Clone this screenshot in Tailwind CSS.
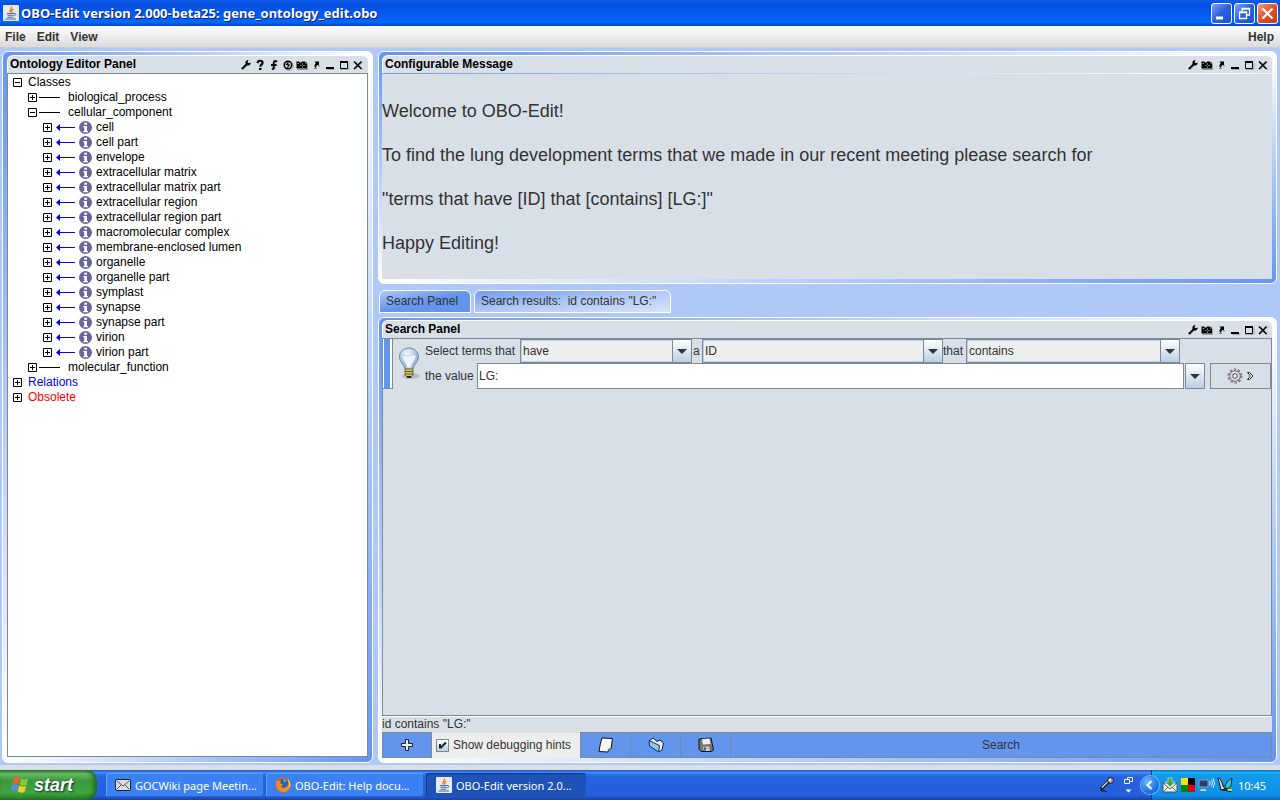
<!DOCTYPE html>
<html lang="en">
<head>
<meta charset="utf-8">
<title>OBO-Edit version 2.000-beta25: gene_ontology_edit.obo</title>
<script src="https://cdn.jsdelivr.net/npm/@tailwindcss/browser@4"></script>
</head>
<body class="flex h-screen flex-col overflow-hidden bg-[#d8dfe6] font-['Liberation_Sans',Arial,sans-serif] text-xs leading-[15px] text-[#333]">

<svg class="hidden" aria-hidden="true">
  <symbol id="wrench" viewBox="0 0 12 12"><path d="M3 11L7 6.500M2 9.500L6 6" stroke="#999" stroke-width="1"/><path d="M1 9.500L5.500 5L5.500 2.500L7.500 1L8.500 1L7.500 3L8.500 4.200L10.500 3.500L10.500 5L9 6.500L6.800 6.500L2.500 10.500Z" fill="#000"/></symbol>
  <symbol id="help" viewBox="0 0 12 12"><path d="M4.500 5V3.500C4.500 1.500 9.500 1.500 9.500 4C9.500 6 7.500 6 7.500 8" fill="none" stroke="#aaa" stroke-width="1.500"/><path d="M3.500 4C3.500 1 8.500 1 8.500 3.700C8.500 5.500 6.200 5.500 6.200 7.700" fill="none" stroke="#000" stroke-width="2"/><path d="M5 9h2.500v2H5z"/></symbol>
  <symbol id="fmark" viewBox="0 0 12 12"><path d="M10 3C7.500 1.500 7 3 7 5V10.500M5 6.500h5" fill="none" stroke="#aaa"/><path d="M9 2.800C6.500 1 5.700 2.500 5.700 4.500V9.500L4 10.500M3 6h5.500" fill="none" stroke="#000" stroke-width="2"/></symbol>
  <symbol id="dock" viewBox="0 0 12 12"><circle cx="7" cy="7" r="4.300" fill="none" stroke="#aaa"/><circle cx="6" cy="6" r="3.700" fill="#d8dfe6" stroke="#000" stroke-width="1.600"/><path d="M6.500 2L3.500 6h2.200L5.200 9.500L8.500 5.500H6.500Z"/></symbol>
  <symbol id="camera" viewBox="0 0 12 12"><path d="M1.500 10.500h10v-6" fill="none" stroke="#999"/><path d="M.5 2.500h3v1h2l.5-1h3l.5 1h1.500v6H.5Z"/><path d="M6.500 4.500v1M6.500 7.500v1M4.500 6.500h1M7.500 6.500h1" stroke="#d8dfe6"/><path d="M1.500 4.500h1.500M9.500 4.500h1" stroke="#d8dfe6" stroke-width=".7"/></symbol>
  <symbol id="float" viewBox="0 0 12 12"><path d="M4.500 2.500H9v4.300L7.700 5.700C6.300 6.700 6 7.500 6.300 9C4 8.200 3.800 6.300 5.800 4Z"/><path d="M4 9.500h3M8.500 7.500l1.500-1" stroke="#888"/></symbol>
  <symbol id="min" viewBox="0 0 12 12"><path d="M3 10.500h8" stroke="#aaa"/><path d="M2 9h8" stroke="#000" stroke-width="2"/></symbol>
  <symbol id="max" viewBox="0 0 12 12"><path d="M2.500 10.500h8.500v-7" fill="none" stroke="#aaa"/><path d="M2.500 2.500h7v7h-7z" fill="none" stroke="#000"/><path d="M2 2h8v2H2z"/></symbol>
  <symbol id="close" viewBox="0 0 12 12"><path d="M3 10.500l8-7.500M4 3l7 8" stroke="#aaa"/><path d="M2 2.500l7.500 7.500M9.500 2.500L2 10" stroke="#000" stroke-width="1.500"/></symbol>
  <symbol id="plus" viewBox="0 0 9 9"><path d="M.5.5h8v8h-8z" fill="#fff" stroke="#000"/><path d="M2 4.500h5M4.500 2v5" stroke="#000"/></symbol>
  <symbol id="minus" viewBox="0 0 9 9"><path d="M.5.5h8v8h-8z" fill="#fff" stroke="#000"/><path d="M2 4.500h5" stroke="#000"/></symbol>
  <symbol id="line" viewBox="0 0 23 9"><path d="M2 4.500h21" stroke="#000"/></symbol>
  <symbol id="link" viewBox="0 0 19 9"><path d="M3 4.500h16" stroke="#00f"/><path d="M0 4.500L4 1v7z" fill="#00f"/></symbol>
  <symbol id="info" viewBox="0 0 13 13"><circle cx="6.500" cy="6.500" r="6.500" fill="#666699"/><path d="M5.300 1.800h2.700v2H5.300zM4.300 5H8v5h1v1.200H4.300V10h1V6.200h-1z" fill="#fff"/></symbol>
  <symbol id="java" viewBox="0 0 16 16"><rect width="16" height="16" rx="1" fill="#e9e9e9"/><path d="M8.500 1.500C9.500 3.500 5.500 4.500 7.500 7.500M10.500 4C8 5 8.500 6 9 7.500" fill="none" stroke="#e8701a" stroke-width="1.300"/><path d="M4 8.500h7M4.500 10.300h6M4.500 12.200h5.500M2.500 14h10.500M11 8.500c2.500-.5 2.500 2-.3 2.500" fill="none" stroke="#3d6ba5"/></symbol>
  <symbol id="arrow" viewBox="0 0 10 5"><path d="M0 0h10L5 5z" fill="#333"/></symbol>
</svg>

<header class="flex h-[26px] shrink-0 items-center bg-[linear-gradient(#0a5ff0,#0a4fdc_15%,#0058ee_45%,#0668fa_85%,#0144c6)] pl-[3px] pr-[2px] text-white">
  <svg class="h-4 w-4"><use href="#java"/></svg>
  <h1 class="flex-1 pl-[2px] font-['Noto_Sans',sans-serif] text-[13px] font-bold [text-shadow:1px_1px_#0a1883]">OBO-Edit version 2.000-beta25: gene_ontology_edit.obo</h1>
  <div class="flex gap-[2px]">
    <button aria-label="Minimize" class="h-[21px] w-[21px] rounded-[3px] border border-white bg-[linear-gradient(135deg,#7fa4f4,#2a5ee0_50%,#1f52d2)]"><svg viewBox="0 0 19 19"><path d="M4 14h7" stroke="#fff" stroke-width="3"/></svg></button>
    <button aria-label="Restore" class="h-[21px] w-[21px] rounded-[3px] border border-white bg-[linear-gradient(135deg,#7fa4f4,#2a5ee0_50%,#1f52d2)]"><svg viewBox="0 0 19 19"><path d="M7 7V4.500h7.500V11H12M4.500 8h7v6.500h-7zM4 8.500h8M7 5h8" fill="none" stroke="#fff" stroke-width="1.300"/></svg></button>
    <button aria-label="Close" class="h-[21px] w-[21px] rounded-[3px] border border-white bg-[linear-gradient(135deg,#f0a088,#e0502a_50%,#c83a12)]"><svg viewBox="0 0 19 19"><path d="M4.500 4.500l10 10M14.500 4.500l-10 10" stroke="#fff" stroke-width="2.200"/></svg></button>
  </div>
</header>

<nav class="flex h-[22px] shrink-0 items-center gap-[11px] border-b border-[#ccc] bg-linear-to-b from-white to-[#dadada] pl-[5px] pr-[6px] pt-px font-bold">
  <button>File</button><button>Edit</button><button>View</button><button class="ml-auto">Help</button>
</nav>

<main class="flex min-h-0 flex-1 gap-[5px] bg-[#b0c8f5] pb-[2px] pl-[2px] pr-[3px] pt-[3px]">

  <section class="flex w-[371px] shrink-0 flex-col rounded-md border border-white bg-[linear-gradient(to_bottom_right,#6495ed,#fff,#6495ed)] p-1 pb-[5px] pt-[3px]">
    <div class="flex h-[18px] shrink-0 items-center rounded-t-md border-l border-t border-white bg-[#d8dfe6] pl-[2px] pr-[4px] text-black">
      <h2 class="flex-1 font-bold">Ontology Editor Panel</h2>
      <div class="flex gap-[2px]">
        <button aria-label="Configure"><svg class="h-3 w-3"><use href="#wrench"/></svg></button>
        <button aria-label="Help"><svg class="h-3 w-3"><use href="#help"/></svg></button>
        <button aria-label="Filter"><svg class="h-3 w-3"><use href="#fmark"/></svg></button>
        <button aria-label="Synchronize"><svg class="h-3 w-3"><use href="#dock"/></svg></button>
        <button aria-label="Snapshot"><svg class="h-3 w-3"><use href="#camera"/></svg></button>
        <button aria-label="Undock"><svg class="h-3 w-3"><use href="#float"/></svg></button>
        <button aria-label="Minimize panel"><svg class="h-3 w-3"><use href="#min"/></svg></button>
        <button aria-label="Maximize panel"><svg class="h-3 w-3"><use href="#max"/></svg></button>
        <button aria-label="Close panel"><svg class="h-3 w-3"><use href="#close"/></svg></button>
      </div>
    </div>
    <ul class="min-h-0 flex-1 border border-[#7a8a99] bg-white pl-[5px] pt-px text-black [&_div]:flex [&_div]:h-[15px] [&_div]:items-center">
      <li><div><svg class="mr-[6px] h-[9px] w-[9px]"><use href="#minus"/></svg>Classes</div>
        <ul class="pl-[15px]">
          <li><div><svg class="h-[9px] w-[9px]"><use href="#plus"/></svg><svg class="mr-2 h-[9px] w-[23px]"><use href="#line"/></svg>biological_process</div></li>
          <li><div><svg class="h-[9px] w-[9px]"><use href="#minus"/></svg><svg class="mr-2 h-[9px] w-[23px]"><use href="#line"/></svg>cellular_component</div>
            <ul id="components" class="pl-[15px]"></ul>
          </li>
          <li><div><svg class="h-[9px] w-[9px]"><use href="#plus"/></svg><svg class="mr-2 h-[9px] w-[23px]"><use href="#line"/></svg>molecular_function</div></li>
        </ul>
      </li>
      <li><div class="text-[#00f]"><svg class="mr-[6px] h-[9px] w-[9px]"><use href="#plus"/></svg>Relations</div></li>
      <li><div class="text-[#f00]"><svg class="mr-[6px] h-[9px] w-[9px]"><use href="#plus"/></svg>Obsolete</div></li>
    </ul>
  </section>

  <div class="flex min-w-0 flex-1 flex-col">
    <section class="flex h-[233px] shrink-0 flex-col rounded-md border border-white bg-[linear-gradient(to_bottom_right,#6495ed,#fff,#6495ed)] p-[3px] pb-1 pr-1">
      <div class="flex h-[18px] shrink-0 items-center rounded-t-md border-l border-t border-white bg-[#d8dfe6] pl-[2px] pr-[3px] text-black">
        <h2 class="flex-1 font-bold">Configurable Message</h2>
        <div class="flex gap-[2px]">
          <button aria-label="Configure"><svg class="h-3 w-3"><use href="#wrench"/></svg></button>
          <button aria-label="Snapshot"><svg class="h-3 w-3"><use href="#camera"/></svg></button>
          <button aria-label="Undock"><svg class="h-3 w-3"><use href="#float"/></svg></button>
          <button aria-label="Minimize panel"><svg class="h-3 w-3"><use href="#min"/></svg></button>
          <button aria-label="Maximize panel"><svg class="h-3 w-3"><use href="#max"/></svg></button>
          <button aria-label="Close panel"><svg class="h-3 w-3"><use href="#close"/></svg></button>
        </div>
      </div>
      <div class="mt-px flex flex-1 flex-col gap-[22px] bg-[#d8dfe6] pt-[26px] text-lg leading-[22px]">
        <p>Welcome to OBO-Edit!</p>
        <p>To find the lung development terms that we made in our recent meeting please search for</p>
        <p>"terms that have [ID] that [contains] [LG:]"</p>
        <p>Happy Editing!</p>
      </div>
    </section>

    <div class="mb-[4px] mt-[6px] flex h-[23px] shrink-0 gap-[3px] pl-px" role="tablist">
      <button role="tab" aria-selected="true" class="w-[92px] rounded-t-md border border-white bg-linear-to-br from-[#b0c8f5] via-[#6495ed] to-[#6495ed] pl-[6px] text-left">Search Panel</button>
      <button role="tab" aria-selected="false" class="w-[197px] rounded-t-md border border-white bg-linear-to-br from-[#6f9cee] via-[#b0c8f5] to-[#d6e3fb] pl-[6px] text-left">Search results:&nbsp; id contains "LG:"</button>
    </div>

    <section class="flex min-h-0 flex-1 flex-col rounded-md border border-white bg-[linear-gradient(to_bottom_right,#6495ed,#fff,#6495ed)] p-[3px] pb-1 pr-1 pt-[2px]">
      <div class="flex h-[18px] shrink-0 items-center rounded-t-md border-l border-t border-white bg-[#d8dfe6] pl-[2px] pr-[3px] text-black">
        <h2 class="flex-1 font-bold">Search Panel</h2>
        <div class="flex gap-[2px]">
          <button aria-label="Configure"><svg class="h-3 w-3"><use href="#wrench"/></svg></button>
          <button aria-label="Snapshot"><svg class="h-3 w-3"><use href="#camera"/></svg></button>
          <button aria-label="Undock"><svg class="h-3 w-3"><use href="#float"/></svg></button>
          <button aria-label="Minimize panel"><svg class="h-3 w-3"><use href="#min"/></svg></button>
          <button aria-label="Maximize panel"><svg class="h-3 w-3"><use href="#max"/></svg></button>
          <button aria-label="Close panel"><svg class="h-3 w-3"><use href="#close"/></svg></button>
        </div>
      </div>
      <div class="flex min-h-0 flex-1 flex-col bg-[#d8dfe6]">
        <div class="min-h-0 flex-1 border border-[#7a8a99] shadow-[0_1px_#fff]">
          <div class="flex h-[50px]">
            <div class="flex w-[10px] border-b border-r border-[#7a8a99] bg-white pl-px"><span class="w-[6px] bg-[#6495ed]"></span></div>
            <svg class="ml-[4px] mt-[7px] h-9 w-6" viewBox="0 0 24 36">
              <defs><radialGradient id="glass" cx=".4" cy=".3"><stop offset="0" stop-color="#f4f9ff"/><stop offset=".6" stop-color="#c3d8f3"/><stop offset="1" stop-color="#9db9df"/></radialGradient></defs>
              <ellipse cx="14" cy="30" rx="9" ry="3" fill="#b4babf"/>
              <path d="M12 2C6.500 2 2.500 6 2.500 11C2.500 16 7 18 8 23H16C17 18 21.500 16 21.500 11C21.500 6 17.500 2 12 2Z" fill="url(#glass)" stroke="#7d8794"/>
              <path d="M5 10C7 8 10 11 12 10S17 8 19 10C18 15 15 16 14 22H10C9 17 6 15 5 10Z" fill="#eef5ff" stroke="#a8bfdc" stroke-width=".7"/>
              <path d="M8 23h8v6l-2 2h-4l-2-2z" fill="#cfc765" stroke="#77713a"/><path d="M8 25.500h8M8 28h8" stroke="#5e5a35"/><path d="M10 31h4" stroke="#222" stroke-width="2"/>
            </svg>
            <div class="flex min-w-0 flex-1 flex-col pl-[4px]">
              <div class="flex h-6 items-center">
                <label for="quant" class="w-[95px]">Select terms that</label>
                <div class="relative h-6 w-[172px]">
                  <select id="quant" class="h-full w-full appearance-none border border-[#7a8a99] bg-[#eee] pl-[2px] shadow-[inset_0_0_0_1px_#b8cfe5]"><option>have</option></select>
                  <span class="pointer-events-none absolute inset-y-0 right-0 flex w-5 items-center justify-center border border-[#7a8a99] bg-linear-to-b from-white to-[#b8cfe5]"><svg class="h-[5px] w-[10px]"><use href="#arrow"/></svg></span>
                </div>
                <label for="field" class="w-[10px] pl-px">a</label>
                <div class="relative h-6 w-[241px]">
                  <select id="field" class="h-full w-full appearance-none border border-[#7a8a99] bg-[#eee] pl-[2px] shadow-[inset_0_0_0_1px_#b8cfe5]"><option>ID</option></select>
                  <span class="pointer-events-none absolute inset-y-0 right-0 flex w-5 items-center justify-center border border-[#7a8a99] bg-linear-to-b from-white to-[#b8cfe5]"><svg class="h-[5px] w-[10px]"><use href="#arrow"/></svg></span>
                </div>
                <label for="op" class="w-[23px]">that</label>
                <div class="relative h-6 w-[214px]">
                  <select id="op" class="h-full w-full appearance-none border border-[#7a8a99] bg-[#eee] pl-[2px] shadow-[inset_0_0_0_1px_#b8cfe5]"><option>contains</option></select>
                  <span class="pointer-events-none absolute inset-y-0 right-0 flex w-5 items-center justify-center border border-[#7a8a99] bg-linear-to-b from-white to-[#b8cfe5]"><svg class="h-[5px] w-[10px]"><use href="#arrow"/></svg></span>
                </div>
              </div>
              <div class="flex h-[26px] items-center">
                <label for="value" class="w-[52px]">the value</label>
                <input id="value" value="LG:" class="h-full min-w-0 flex-1 border border-[#7a8a99] bg-white px-px">
                <button aria-label="Previous values" class="ml-px flex h-full w-5 items-center justify-center border border-[#7a8a99] bg-linear-to-b from-white to-[#b8cfe5]"><svg class="h-[5px] w-[10px]"><use href="#arrow"/></svg></button>
                <button aria-label="Search options" class="ml-[5px] flex h-full w-[61px] items-center justify-center gap-1 border border-[#7a8a99]">
                  <svg class="h-4 w-4" viewBox="0 0 16 16"><circle cx="8" cy="8" r="6.300" fill="none" stroke="#555" stroke-width="2.200" stroke-dasharray="2.200 1.758"/><circle cx="8" cy="8" r="5.200" fill="#ddd" stroke="#666" stroke-width=".8"/><circle cx="8" cy="8" r="6.300" fill="none" stroke="#ddd" stroke-width="1" stroke-dasharray="1.400 2.558" stroke-dashoffset="-.4"/><circle cx="8" cy="8" r="2.300" fill="#f4f4f4" stroke="#444"/></svg>
                  <svg class="h-2 w-[7px]" viewBox="0 0 7 8"><path d="M.5.500h2L6 4 2.500 7.500h-2L3.500 4z" fill="#fff" stroke="#222"/></svg>
                </button>
              </div>
            </div>
          </div>
        </div>
        <p class="mt-px h-[15px] shrink-0">id contains "LG:"</p>
        <div class="flex h-[26px] shrink-0">
          <button aria-label="Add" class="flex w-[50px] items-center justify-center border border-[#7a8a99] bg-[#6495ed]"><svg class="h-3 w-3" viewBox="0 0 12 12"><path d="M4.500.5h3v4h4v3h-4v4h-3v-4h-4v-3h4z" fill="#e8eaf0" stroke="#222"/></svg></button>
          <label class="mt-px flex w-[148px] items-center gap-1 bg-[#eee] pl-1"><span class="relative h-[13px] w-[13px]"><input type="checkbox" checked class="block h-[13px] w-[13px] appearance-none border border-[#7a8a99] bg-linear-to-b from-white to-[#b8cfe5]"><svg class="pointer-events-none absolute inset-0" viewBox="0 0 13 13"><path d="M4 5v4.500M4.500 9L10 3.500" fill="none" stroke="#222" stroke-width="2"/></svg></span>Show debugging hints</label>
          <button aria-label="New" class="flex w-[51px] items-center justify-center border border-[#7a8a99] bg-[#6495ed]"><svg class="h-4 w-4" viewBox="0 0 16 16"><path d="M4 1L14.500 1.500L13 12L10 15L1 14.500Q2 7 4 1Z" fill="#f6f6f6" stroke="#111"/><path d="M10 15L10.500 12L13 12" fill="#bbb" stroke="#333" stroke-width=".7"/></svg></button>
          <button aria-label="Open" class="-ml-px flex w-[51px] items-center justify-center border border-[#7a8a99] bg-[#6495ed]"><svg class="h-4 w-4" viewBox="0 0 16 16"><path d="M1 4L5 1L9 4.500L12 3L15.500 6L14 13L11 14.500Z" fill="#e8edf2" stroke="#222"/><path d="M1 3.500L11.500 8.500L10.500 15L1.500 9Z" fill="#8cc6f2" stroke="#235"/></svg></button>
          <button aria-label="Save" class="-ml-px flex w-[51px] items-center justify-center border border-[#7a8a99] bg-[#6495ed]"><svg class="h-4 w-4" viewBox="0 0 16 16"><path d="M1 2L13 1L15.500 13L13 14.500L3 14.500L1 12Z" fill="#777" stroke="#111"/><path d="M4 2L11.500 1.500L12.500 7L5 7.500Z" fill="#eee"/><path d="M5 10L11 9.500L12 14H6Z" fill="#ccc"/><path d="M7 10.500v3" stroke="#333" stroke-width="1.500"/></svg></button>
          <button class="-ml-px flex-1 border border-[#7a8a99] bg-[#6495ed]">Search</button>
        </div>
      </div>
    </section>
  </div>
</main>

<footer class="mt-[5px] flex h-[30px] shrink-0 bg-[linear-gradient(#1f4fc0,#3f8cf3_8%,#2663e0_20%,#245edb_85%,#1941a5)] font-['Noto_Sans',sans-serif] text-[11px] text-white">
  <button class="flex w-[97px] items-center gap-[5px] rounded-r-[10px] bg-[linear-gradient(#2f7a2f,#6cbb6c_12%,#3c973c_35%,#3fa63f_75%,#2a7a2a)] pl-[10px] font-['Liberation_Sans',sans-serif] text-lg font-bold italic shadow-[inset_-3px_0_4px_#1f661f] [text-shadow:1px_1px_2px_#123]">
    <svg class="h-[18px] w-[19px]" viewBox="0 0 19 18"><path d="M4 2Q7 0 10 2L8.500 8Q5.500 6.500 2.500 8Z" fill="#f0622a"/><path d="M11 2.500Q14 4.500 18 2.500L16.500 9Q13 10.500 9.500 8.500Z" fill="#83c93a"/><path d="M2.200 9Q5 7.500 8.200 9L6.700 15Q4 13.500.7 15Z" fill="#5b8df0"/><path d="M9.200 9.500Q13 11.500 16.200 10L14.500 16Q11 17.500 7.700 15.500Z" fill="#fbc928"/></svg>start</button>
  <div class="ml-[9px] flex flex-1 items-center gap-[2px]">
    <button class="flex h-[24px] w-[158px] items-center gap-1 rounded-[3px] bg-[#3c81f3] pl-[9px] shadow-[inset_1px_1px_#64a0f8,inset_-1px_-1px_#2a62d0]"><svg class="h-4 w-4" viewBox="0 0 16 16"><rect x=".5" y="2.500" width="15" height="11" rx="1.500" fill="#ddd" stroke="#222"/><path d="M2 4l6 5 6-5M2 12l4-4M14 12l-4-4" fill="none" stroke="#555"/></svg>GOCWiki page Meetin...</button>
    <button class="flex h-[24px] w-[158px] items-center gap-1 rounded-[3px] bg-[#3c81f3] pl-[9px] shadow-[inset_1px_1px_#64a0f8,inset_-1px_-1px_#2a62d0]"><svg class="h-4 w-4" viewBox="0 0 16 16"><circle cx="8" cy="8" r="7.500" fill="#e66000"/><circle cx="8.500" cy="7" r="5" fill="#2a62b8"/><path d="M8 2l3 1-1 3z" fill="#7fc4f0"/><path d="M1 3L3 4.500Q5 3 6 4L5 6L8 7.500Q5 9 7 10.500Q10 12 13 8.500Q15 6 12.500 2Q17 6 15 11Q12 16 7 15Q0 14 1 3Z" fill="#f58a1f"/><path d="M13 3Q15.500 6 14 10" fill="none" stroke="#ffd23a" stroke-width="1.200"/></svg>OBO-Edit: Help docu...</button>
    <button class="flex h-[24px] w-[160px] items-center gap-1 rounded-[3px] bg-[#1e52b7] pl-[10px] shadow-[inset_1px_1px_#123a8c]"><svg class="h-4 w-4"><use href="#java"/></svg>OBO-Edit version 2.0...</button>
  </div>
  <div class="flex items-center gap-[9px] pr-[18px]">
    <svg class="h-4 w-4" viewBox="0 0 16 16"><path d="M2 12L9.500 4.500" stroke="#222" stroke-width="3.500"/><path d="M3 10.500L9.500 4" stroke="#ddd" stroke-width="1.300"/><circle cx="11.500" cy="3.500" r="3" fill="#999" stroke="#222"/><circle cx="11" cy="3" r="1.200" fill="#eee"/><path d="M2 12Q1 15 4 14T8 15.500" fill="none" stroke="#111"/></svg>
    <svg class="h-4 w-[9px]" viewBox="0 0 9 16"><path d="M3.500 2.500v-2h5v4h-2M.5 2.500h5v4h-5z" fill="none" stroke="#fff"/><path d="M1.500 12.500h6L4.500 15.500z" fill="#fff"/></svg>
  </div>
  <div class="relative flex items-center gap-[2px] border-l border-[#0a3f9c] bg-[linear-gradient(#0c68c8,#1cb0f5_8%,#129aea_20%,#0f8fe8_85%,#0c68b8)] pl-[10px] pr-[14px]">
    <button aria-label="Show hidden icons" class="absolute -left-[11px] h-[18px] w-[18px] rounded-full bg-[radial-gradient(circle_at_35%_30%,#6ab8ff,#1565d8_75%)] ring-1 ring-[#7fb8f5]"><svg viewBox="0 0 18 18"><path d="M10.500 5L6.500 9l4 4" fill="none" stroke="#fff" stroke-width="2"/></svg></button>
    <svg class="h-4 w-4" viewBox="0 0 16 16"><path d="M1 6h14v9H1z" fill="#f2f2e8" stroke="#555"/><path d="M1 6l7 6 7-6M1 15l5-5M15 15l-5-5" fill="none" stroke="#666"/><path d="M6 1h4v4h3L8 10 3 5h3z" fill="#3aa83a" stroke="#fff" stroke-width=".5"/></svg>
    <svg class="ml-px h-[14px] w-[14px]" viewBox="0 0 14 14"><path d="M0 0h7v7H0z" fill="#fd0"/><path d="M7 0h7v7H7z"/><path d="M0 7h7v7H0z" fill="#080"/><path d="M7 7h7v7H7z" fill="#e00"/></svg>
    <svg class="ml-px h-4 w-[17px]" viewBox="0 0 17 16"><path d="M1 3h9v7H1z" fill="#28406e" stroke="#8aa0c0"/><path d="M3 12h5v2H2z" fill="#ccc"/><path d="M11.500 4q1.500 2 0 4M13.500 2.500q2 3.500 0 7M15 1q3 5 0 10" fill="none" stroke="#e0e6f0"/></svg>
    <svg class="h-4 w-4" viewBox="0 0 16 16"><path d="M1 1q3 0 5 8l2 3-4 1Q3 9 1 1Z" fill="#ddd" stroke="#111"/><path d="M15 1l-1 8-4 3-2-3Q10 3 15 1Z" fill="#35c8c8" stroke="#134"/><path d="M5 13l5-1 4 3" stroke="#222" stroke-width="1.500"/><path d="M10 12h5v2h-4z" fill="#e8c23a"/></svg>
    <span class="ml-[3px]">10:45</span>
  </div>
</footer>

<script>
  const terms = ["cell", "cell part", "envelope", "extracellular matrix", "extracellular matrix part",
    "extracellular region", "extracellular region part", "macromolecular complex", "membrane-enclosed lumen",
    "organelle", "organelle part", "symplast", "synapse", "synapse part", "virion", "virion part"];
  document.getElementById("components").innerHTML = terms.map(t =>
    `<li><div><svg class="mr-1 h-[9px] w-[9px]"><use href="#plus"/></svg><svg class="mr-[4px] h-[9px] w-[19px]"><use href="#link"/></svg><svg class="mr-1 h-[13px] w-[13px]"><use href="#info"/></svg>${t}</div></li>`).join("");
</script>
</body>
</html>
